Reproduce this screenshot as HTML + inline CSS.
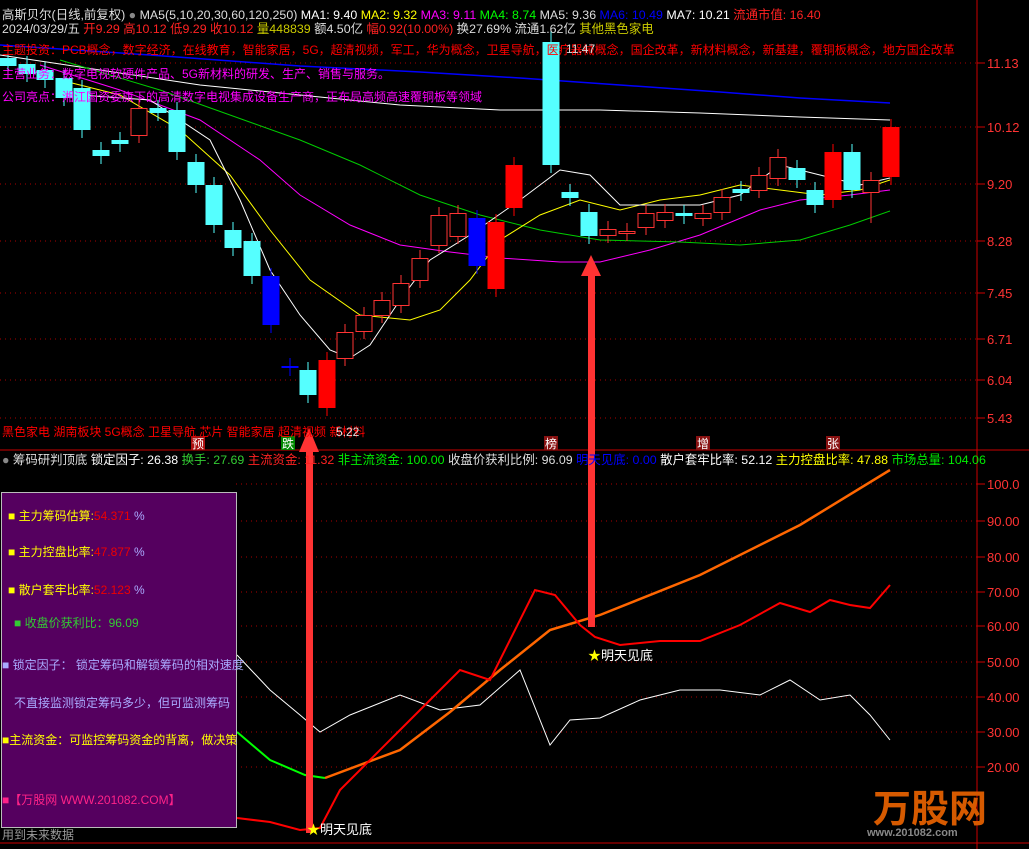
<!DOCTYPE html>
<html><head><meta charset="utf-8"><style>
html,body{margin:0;padding:0;background:#000;width:1029px;height:849px;overflow:hidden;font-family:"Liberation Sans","Noto Sans CJK SC",sans-serif;}
.t{position:absolute;white-space:nowrap;font-size:12px;line-height:14px;}
.h{font-size:12.4px}
svg{position:absolute;left:0;top:0}
</style></head><body>
<svg id="s" width="1029" height="849" xmlns="http://www.w3.org/2000/svg"></svg>

<div class="t h" style="left:2px;top:8px;color:#ddd">高斯贝尔(日线,前复权) <span style="color:#888">●</span> MA5(5,10,20,30,60,120,250) <span style="color:#fff">MA1: 9.40</span> <span style="color:#ff0">MA2: 9.32</span> <span style="color:#f0f">MA3: 9.11</span> <span style="color:#0f0">MA4: 8.74</span> <span style="color:#ddd">MA5: 9.36</span> <span style="color:#00f">MA6: 10.49</span> <span style="color:#fff">MA7: 10.21</span> <span style="color:#f22">流通市值: 16.40</span></div>
<div class="t h" style="left:2px;top:22px;color:#ddd">2024/03/29/五 <span style="color:#f22">开9.29 高10.12 低9.29 收10.12</span> <span style="color:#cc0">量448839</span> 额4.50亿 <span style="color:#f22">幅0.92(10.00%)</span> 换27.69% 流通1.62亿 <span style="color:#cc0">其他黑色家电</span></div>
<div class="t" style="left:2px;top:43px;color:#f00">主题投资：PCB概念，数字经济，在线教育，智能家居，5G，超清视频，军工，华为概念，卫星导航，医疗器械概念，国企改革，新材料概念，新基建，覆铜板概念，地方国企改革</div>
<div class="t" style="left:2px;top:67px;color:#f0f">主营业务：数字电视软硬件产品、5G新材料的研发、生产、销售与服务。</div>
<div class="t" style="left:2px;top:90px;color:#f0f">公司亮点：湘江国资委旗下的高清数字电视集成设备生产商，正布局高频高速覆铜板等领域</div>
<div class="t" style="left:2px;top:425px;color:#f00">黑色家电 湖南板块 5G概念 卫星导航 芯片 智能家居 超清视频 新材料</div>
<div class="t" style="left:336px;top:425px;color:#ddd">5.22</div>
<div class="t" style="left:566px;top:42px;color:#ddd">11.47</div>

<div class="t h" style="left:2px;top:453px;color:#ddd"><span style="color:#888">●</span> 筹码研判顶底 <span style="color:#fff">锁定因子: 26.38</span> <span style="color:#3c3">换手: 27.69</span> <span style="color:#f22">主流资金: 11.32</span> <span style="color:#0e0">非主流资金: 100.00</span> 收盘价获利比例: 96.09 <span style="color:#00f">明天见底: 0.00</span> <span style="color:#fff">散户套牢比率: 52.12</span> <span style="color:#ff0">主力控盘比率: 47.88</span> <span style="color:#0e0">市场总量: 104.06</span></div>

<div style="position:absolute;left:1px;top:492px;width:234px;height:334px;background:#55005f;border:1px solid #bbb"></div>
<div class="t" style="left:8px;top:509px;color:#ff0">■ 主力筹码估算:<span style="color:#e00">54.371</span> <span style="color:#aaf">%</span></div>
<div class="t" style="left:8px;top:545px;color:#ff0">■ 主力控盘比率:<span style="color:#e00">47.877</span> <span style="color:#aaf">%</span></div>
<div class="t" style="left:8px;top:583px;color:#ff0">■ 散户套牢比率:<span style="color:#e00">52.123</span> <span style="color:#aaf">%</span></div>
<div class="t" style="left:14px;top:616px;color:#3c3">■ 收盘价获利比：96.09</div>
<div class="t" style="left:2px;top:658px;color:#aaf">■ 锁定因子： 锁定筹码和解锁筹码的相对速度</div>
<div class="t" style="left:14px;top:696px;color:#aaf">不直接监测锁定筹码多少，但可监测筹码</div>
<div class="t" style="left:2px;top:733px;color:#ff0">■主流资金：可监控筹码资金的背离，做决策</div>
<div class="t" style="left:2px;top:793px;color:#f28">■【万股网 WWW.201082.COM】</div>
<div class="t" style="left:2px;top:828px;color:#999">用到未来数据</div>
<div class="t" style="left:588px;top:649px;color:#fff;font-size:13px"><span style="color:#ff0">★</span>明天见底</div>
<div class="t" style="left:307px;top:823px;color:#fff;font-size:13px"><span style="color:#ff0">★</span>明天见底</div>
<div class="t" style="left:873px;top:790px;color:#d65a00;font-size:38px;line-height:40px;font-weight:bold">万股网</div>
<div class="t" style="left:867px;top:826px;color:#888;font-size:11px;font-weight:bold">www.201082.com</div>

<script>
var s=document.getElementById('s'),h='';
function L(x1,y1,x2,y2,c,w,d){h+='<line x1="'+x1+'" y1="'+y1+'" x2="'+x2+'" y2="'+y2+'" stroke="'+c+'" stroke-width="'+(w||1)+'"'+(d?' stroke-dasharray="'+d+'"':'')+'/>';}
function R(x,y,w,hh,f,st){h+='<rect x="'+x+'" y="'+y+'" width="'+w+'" height="'+hh+'" fill="'+f+'"'+(st?' stroke="'+st+'"':'')+'/>';}
function P(pts,c,w){h+='<polyline fill="none" stroke="'+c+'" stroke-width="'+(w||1)+'" points="'+pts+'"/>';}
function T(x,y,t,c){h+='<text x="'+x+'" y="'+y+'" fill="'+c+'" font-size="13" font-family="Liberation Sans">'+t+'</text>';}
[[63,'11.13'],[127,'10.12'],[184,'9.20'],[241,'8.28'],[293,'7.45'],[339,'6.71'],[380,'6.04'],[418,'5.43']].forEach(function(a){L(0,a[0],977,a[0],'#a00',1,'1 4');L(977,a[0],985,a[0],'#c00');T(987,a[0]+5,a[1],'#f33');});
[[484,'100.0'],[521,'90.00'],[557,'80.00'],[592,'70.00'],[626,'60.00'],[662,'50.00'],[697,'40.00'],[732,'30.00'],[767,'20.00']].forEach(function(a){L(236,a[0],977,a[0],'#a00',1,'1 4');L(977,a[0],985,a[0],'#c00');T(987,a[0]+5,a[1],'#f33');});
L(977,0,977,849,'#c00');L(0,450,1029,450,'#c00');L(0,843,1029,843,'#c00');
P('0,55 100,70 200,85 300,95 400,105 500,110 600,110 700,113 800,117 890,120','#fff');
P('0,45 150,55 300,66 420,72 520,78 620,85 720,92 800,98 890,103','#00f',1.5);
P('40,65 120,90 200,120 260,160 300,195 350,225 400,245 450,252 500,258 560,262 600,262 650,250 700,235 760,210 800,200 850,195 890,190','#f0f');
P('60,60 160,90 230,115 300,140 360,165 420,195 480,215 540,230 600,240 680,242 740,245 800,240 850,225 890,211','#0c0');
P('60,80 120,95 180,130 230,175 270,230 310,280 360,315 410,320 440,310 470,280 500,240 540,215 580,200 620,210 660,200 700,195 740,185 780,190 820,195 860,190 890,180','#ff0');
P('80,95 150,100 210,140 240,200 270,270 300,315 330,350 350,358 370,345 400,300 430,260 470,235 520,200 560,170 590,175 620,205 660,205 700,205 740,195 780,165 820,175 860,185 890,178','#fff');
var C=[[8,58,66,'c'],[27,64,74,'c'],[45,70,80,'c'],[64,78,98,'c'],[82,88,130,'c'],[101,150,156,'c'],[120,140,144,'c'],[139,108,135,'r'],[158,108,113,'c'],[177,110,152,'c'],[196,162,185,'c'],[214,185,225,'c'],[233,230,248,'c'],[252,241,276,'c'],[271,276,325,'b'],[290,366,368,'b'],[308,370,395,'c'],[327,360,408,'R'],[345,332,358,'r'],[364,315,331,'r'],[382,300,315,'r'],[401,283,305,'r'],[420,258,280,'r'],[439,215,245,'r'],[458,213,236,'r'],[477,218,266,'b'],[496,222,289,'R'],[514,165,208,'R'],[551,42,165,'c'],[570,192,198,'c'],[589,212,236,'c'],[608,229,235,'r'],[627,231,233,'r'],[646,213,227,'r'],[665,212,220,'r'],[684,213,216,'c'],[703,213,218,'r'],[722,197,212,'r'],[741,189,193,'c'],[759,175,190,'r'],[778,157,178,'r'],[797,168,180,'c'],[815,190,205,'c'],[833,152,200,'R'],[852,152,190,'c'],[871,180,192,'r'],[891,127,177,'R']];
C.forEach(function(k){var x=k[0],t=k[1],b=k[2],y=k[3],w=17;var col={c:'#5ff',r:'#f33',R:'#f00',b:'#00f'}[y];L(x,t-8,x,b+8,col);if(y=='r')R(x-w/2+.5,t+.5,w-1,Math.max(b-t,1),'#000',col);else R(x-w/2,t,w,Math.max(b-t,2),col);});
L(871,192,871,223,'#f33');L(551,30,551,42,'#5ff');
[[288,'跌','#080'],[198,'预','#a11'],[551,'榜','#811'],[703,'增','#811'],[833,'张','#811']].forEach(function(a){R(a[0]-7,436,14,14,a[2]);h+='<text x="'+(a[0]-6)+'" y="448" fill="#fff" font-size="12" font-family="Noto Sans CJK SC">'+a[1]+'</text>';});
P('237,655 270,690 300,715 320,732 350,715 400,695 440,710 480,705 520,670 550,745 570,720 600,718 640,700 680,690 720,690 760,695 790,680 820,700 850,695 870,715 890,740','#fff');
P('237,732 270,760 305,775 325,778','#0f0',2);
P('325,778 400,750 450,712 500,670 550,630 600,615 700,575 800,525 890,470','#f60',2.5);
P('237,818 270,822 300,830 320,828 340,790 400,730 460,670 490,680 535,590 555,595 580,625 595,637 620,645 660,641 700,641 740,625 780,603 810,612 830,600 850,605 870,608 890,585','#f00',2);
R(306,448,7,385,'#f33');h+='<polygon points="299,452 309,428 319,452" fill="#f33"/>';
R(588,272,7,355,'#f33');h+='<polygon points="581,276 591,255 601,276" fill="#f33"/>';
s.innerHTML=h;
</script>
</body></html>
